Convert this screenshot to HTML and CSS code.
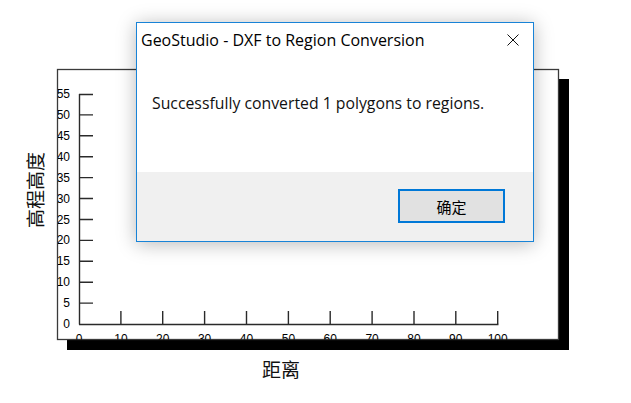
FILE: index.html
```html
<!DOCTYPE html>
<html lang="zh-CN">
<head>
    <meta charset="UTF-8">
    <title>GeoStudio - DXF to Region Conversion</title>
    <link rel="stylesheet" href="styles.css">
</head>
<body>
    <div class="screen">
        <!-- background chart -->
        <svg class="chart" width="631" height="403" viewBox="0 0 631 403">
            <defs>
                <clipPath id="plotClip">
                    <rect x="58" y="70" width="500" height="269.5"></rect>
                </clipPath>
            </defs>
            <rect class="frame-shadow" x="67" y="79" width="502" height="271"></rect>
            <rect class="frame" x="57.5" y="69.5" width="501" height="270"></rect>

            <g clip-path="url(#plotClip)">
                <g class="axis">
                    <line x1="79.5" y1="94" x2="79.5" y2="324.5"></line>
                    <line x1="79" y1="324.5" x2="498.5" y2="324.5"></line>

                    <line x1="79" y1="303.1" x2="93" y2="303.1"></line>
                    <line x1="79" y1="282.2" x2="93" y2="282.2"></line>
                    <line x1="79" y1="261.3" x2="93" y2="261.3"></line>
                    <line x1="79" y1="240.4" x2="93" y2="240.4"></line>
                    <line x1="79" y1="219.5" x2="93" y2="219.5"></line>
                    <line x1="79" y1="198.5" x2="93" y2="198.5"></line>
                    <line x1="79" y1="177.6" x2="93" y2="177.6"></line>
                    <line x1="79" y1="156.7" x2="93" y2="156.7"></line>
                    <line x1="79" y1="135.8" x2="93" y2="135.8"></line>
                    <line x1="79" y1="114.9" x2="93" y2="114.9"></line>
                    <line x1="79" y1="94.5" x2="93" y2="94.5"></line>

                    <line x1="120.9" y1="311" x2="120.9" y2="324"></line>
                    <line x1="162.7" y1="311" x2="162.7" y2="324"></line>
                    <line x1="204.6" y1="311" x2="204.6" y2="324"></line>
                    <line x1="246.5" y1="311" x2="246.5" y2="324"></line>
                    <line x1="288.4" y1="311" x2="288.4" y2="324"></line>
                    <line x1="330.2" y1="311" x2="330.2" y2="324"></line>
                    <line x1="372.1" y1="311" x2="372.1" y2="324"></line>
                    <line x1="414" y1="311" x2="414" y2="324"></line>
                    <line x1="455.8" y1="311" x2="455.8" y2="324"></line>
                    <line x1="497.7" y1="311" x2="497.7" y2="324"></line>
                </g>

                <g class="y-labels">
                    <text x="70" y="324">0</text>
                    <text x="70" y="303.1">5</text>
                    <text x="70" y="282.2">10</text>
                    <text x="70" y="261.3">15</text>
                    <text x="70" y="240.4">20</text>
                    <text x="70" y="219.5">25</text>
                    <text x="70" y="198.5">30</text>
                    <text x="70" y="177.6">35</text>
                    <text x="70" y="156.7">40</text>
                    <text x="70" y="135.8">45</text>
                    <text x="70" y="114.9">50</text>
                    <text x="70" y="94">55</text>
                </g>

                <g class="x-labels">
                    <text x="79" y="339">0</text>
                    <text x="120.9" y="339">10</text>
                    <text x="162.7" y="339">20</text>
                    <text x="204.6" y="339">30</text>
                    <text x="246.5" y="339">40</text>
                    <text x="288.4" y="339">50</text>
                    <text x="330.2" y="339">60</text>
                    <text x="372.1" y="339">70</text>
                    <text x="414" y="339">80</text>
                    <text x="455.8" y="339">90</text>
                    <text x="497.7" y="339">100</text>
                </g>
            </g>

            <text class="axis-title" x="34" y="190" transform="rotate(-90 34 190)">高程高度</text>
            <text class="axis-title" x="281" y="368">距离</text>
        </svg>

        <!-- message box -->
        <div class="dialog">
            <div class="dialog-title">
                <span>GeoStudio - DXF to Region Conversion</span>
                <svg class="close-icon" width="12" height="12" viewBox="0 0 12 12">
                    <path d="M0.5 0.5 L11.5 11.5 M11.5 0.5 L0.5 11.5"></path>
                </svg>
            </div>
            <div class="dialog-body">
                <p>Successfully converted 1 polygons to regions.</p>
            </div>
            <div class="dialog-footer">
                <button class="ok-button">确定</button>
            </div>
        </div>
    </div>
</body>
</html>
```

FILE: styles.css
```css
* {
    margin: 0;
    padding: 0;
    box-sizing: border-box;
}

body {
    background: white;
    font-family: 'Open Sans', 'Noto Sans', 'Noto Sans CJK SC', sans-serif;
    overflow: hidden;
}

.screen {
    position: relative;
    width: 631px;
    height: 403px;
    background: white;
}

.chart {
    display: block;
}

.frame-shadow {
    fill: #000;
}

.frame {
    fill: white;
    stroke: #3a3a3a;
    stroke-width: 1.3;
}

.axis line {
    stroke: #2a2a2a;
    stroke-width: 1.4;
}

.y-labels text,
.x-labels text {
    font-family: 'Liberation Sans', Arial, sans-serif;
    font-size: 12px;
    fill: #000;
    dominant-baseline: central;
}

.y-labels text {
    text-anchor: end;
}

.x-labels text {
    text-anchor: middle;
}

.axis-title {
    font-family: 'Noto Sans CJK SC', sans-serif;
    font-size: 19px;
    fill: #111;
    text-anchor: middle;
    dominant-baseline: central;
}

.dialog {
    position: absolute;
    left: 136px;
    top: 22px;
    width: 398px;
    height: 220px;
    background: white;
    border: 1px solid #1883d7;
    box-shadow: 0 2px 18px rgba(0,0,0,0.28);
    display: flex;
    flex-direction: column;
}

.dialog-title {
    height: 34px;
    padding: 0 14px 0 4px;
    display: flex;
    align-items: center;
    justify-content: space-between;
    font-size: 16px;
    color: #000;
}

.close-icon path {
    stroke: #111;
    stroke-width: 1;
    fill: none;
}

.dialog-body {
    flex: 1;
    padding: 35px 15px 0 15px;
    font-size: 15.8px;
    color: #111;
    line-height: 22px;
}

.dialog-footer {
    height: 69px;
    background: #f0f0f0;
    display: flex;
    justify-content: flex-end;
    padding: 17px 28px 0 0;
}

.ok-button {
    width: 107px;
    height: 34px;
    background: #e1e1e1;
    border: 2px solid #0078d7;
    font-family: 'Noto Sans CJK SC', sans-serif;
    font-size: 15px;
    color: #000;
}
```
